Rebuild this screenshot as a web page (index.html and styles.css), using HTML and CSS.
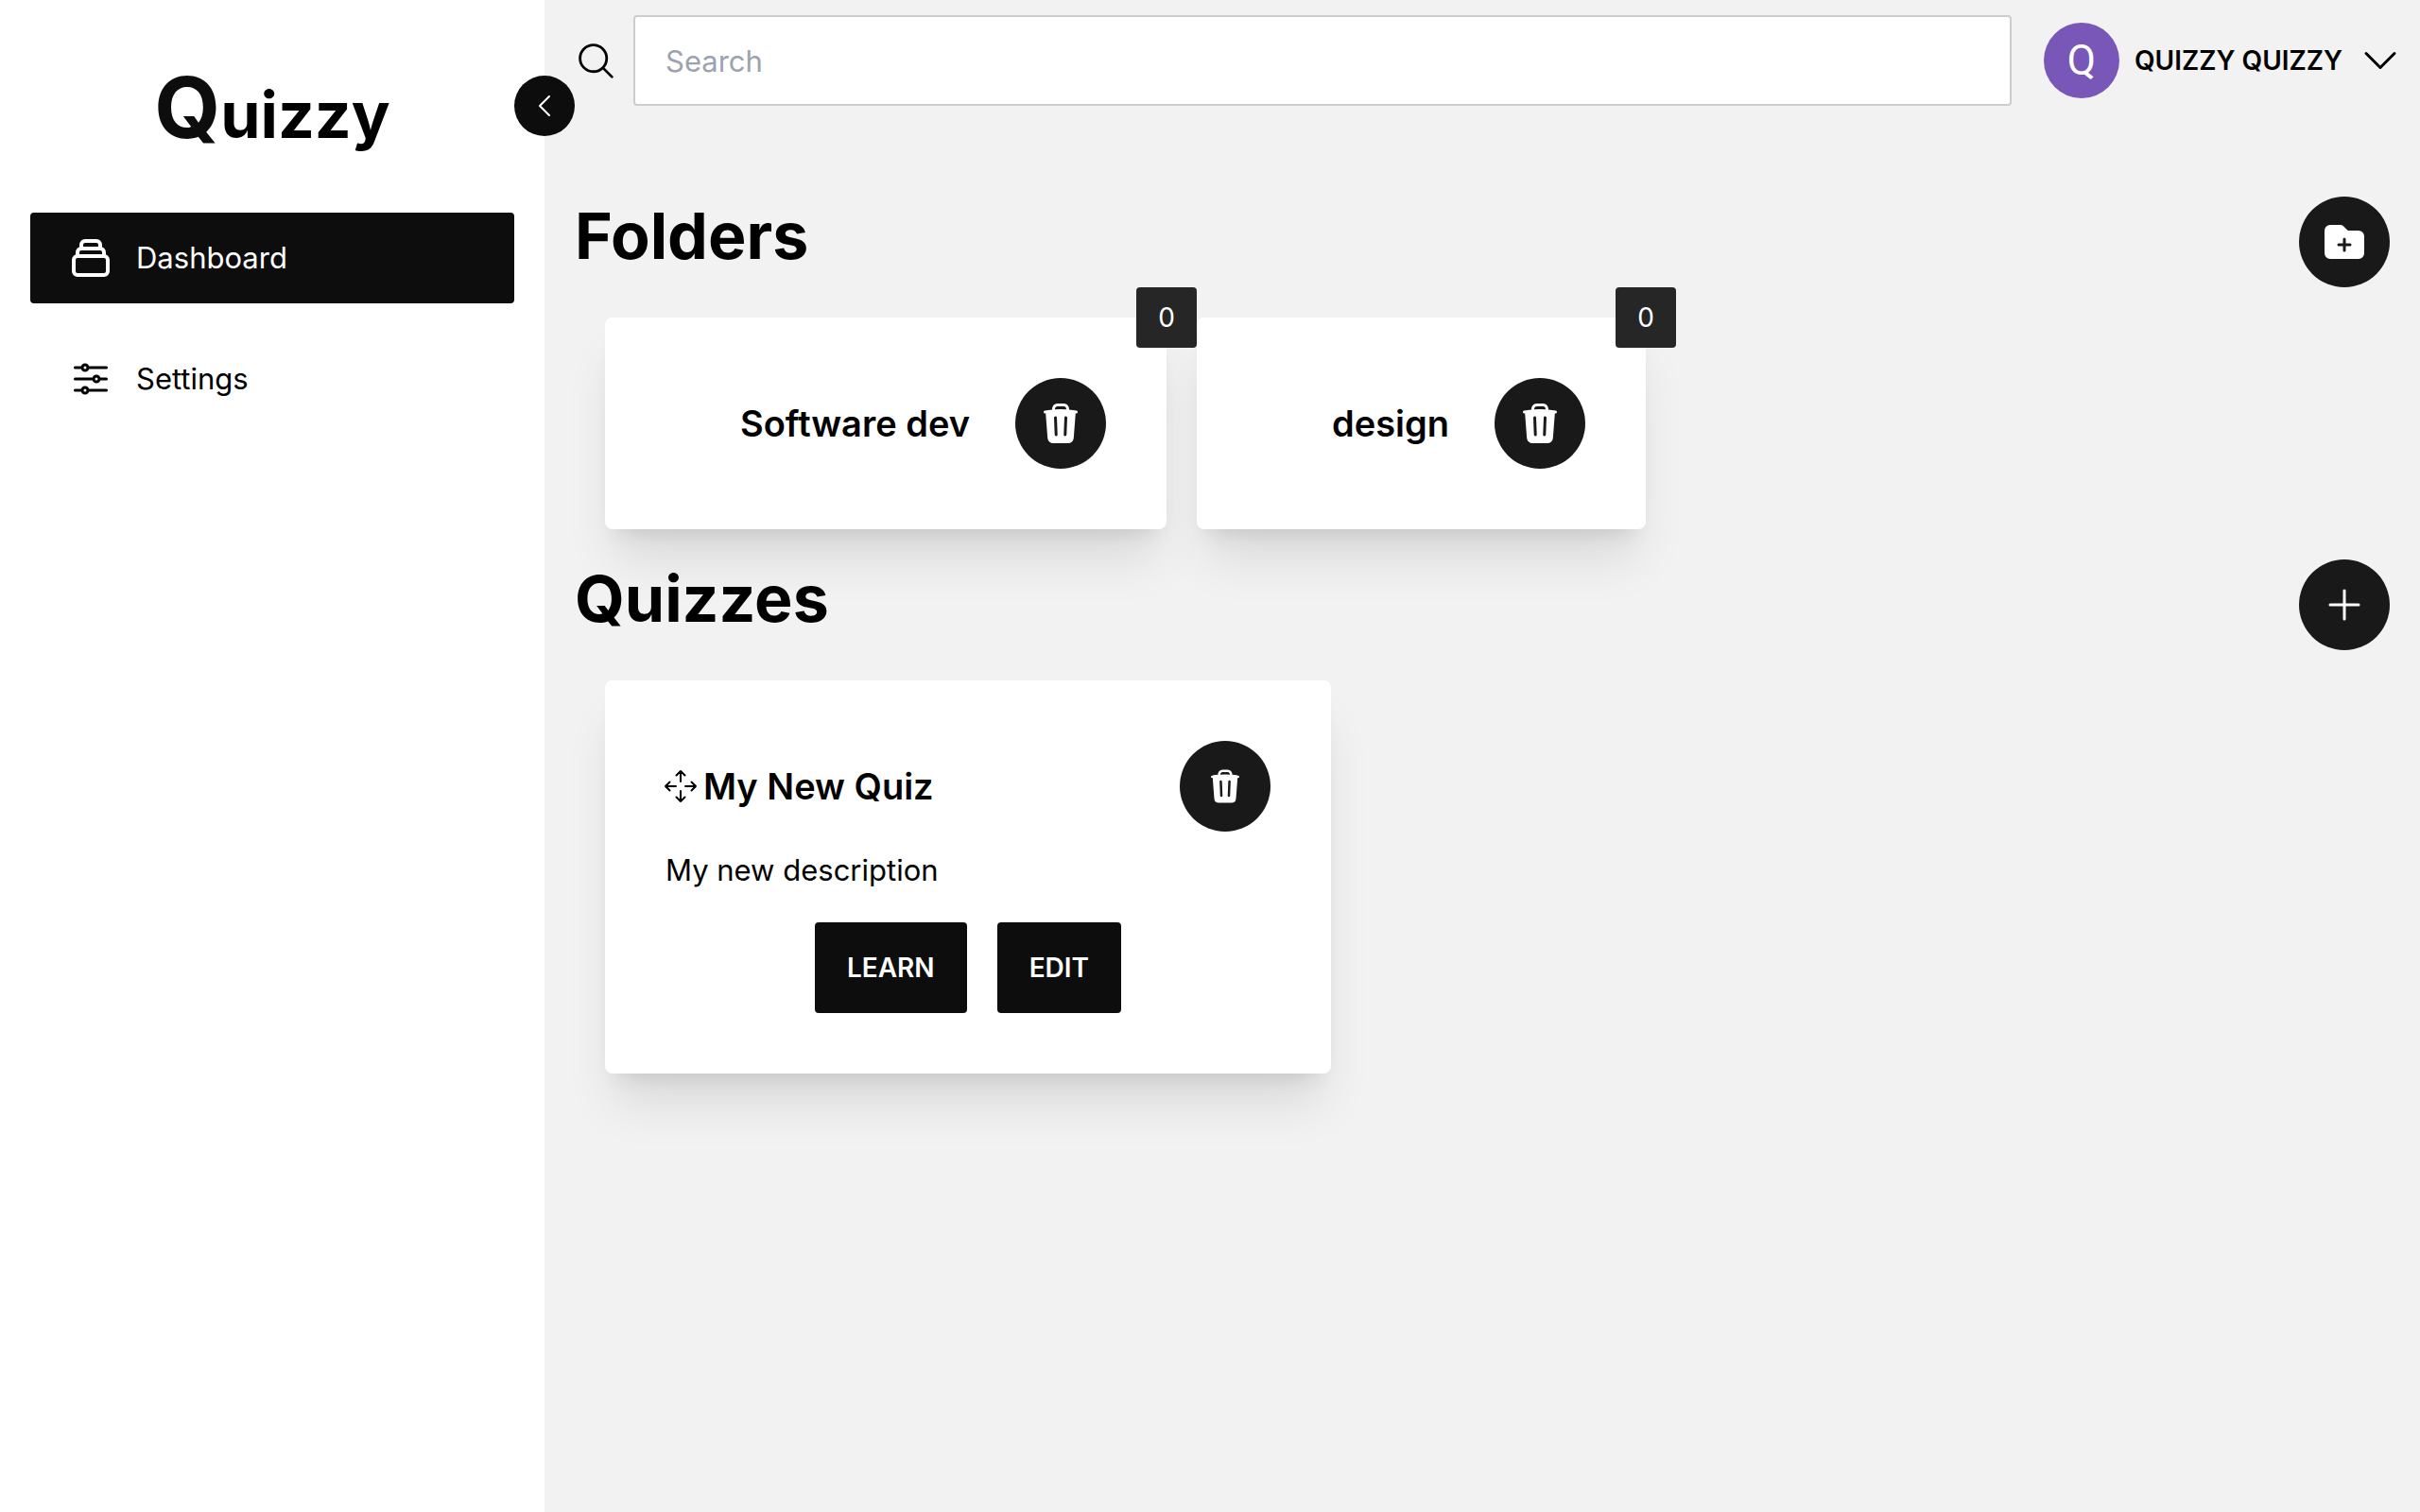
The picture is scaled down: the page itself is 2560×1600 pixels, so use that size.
FILE: index.html
```html
<!DOCTYPE html>
<html lang="en">
<head>
<meta charset="utf-8">
<meta name="viewport" content="width=device-width, initial-scale=1">
<title>Quizzy</title>
<link rel="stylesheet" href="styles.css">
</head>
<body>
<svg class="sprite" aria-hidden="true">
  <symbol id="trash" viewBox="0 0 24 24"><path fill="currentColor" fill-rule="evenodd" clip-rule="evenodd" d="M16.5 4.478v.227a48.816 48.816 0 013.878.512.75.75 0 11-.256 1.478l-.209-.035-1.005 13.07a3 3 0 01-2.991 2.77H8.084a3 3 0 01-2.991-2.77L4.087 6.66l-.209.035a.75.75 0 01-.256-1.478A48.567 48.567 0 017.5 4.705v-.227c0-1.564 1.213-2.9 2.816-2.951a52.662 52.662 0 013.369 0c1.603.051 2.815 1.387 2.815 2.951zm-6.136-1.452a51.196 51.196 0 013.273 0C14.39 3.05 15 3.684 15 4.478v.113a49.488 49.488 0 00-6 0v-.113c0-.794.609-1.428 1.364-1.452zm-.355 5.945a.75.75 0 10-1.5.058l.347 9a.75.75 0 101.499-.058l-.346-9zm5.48.058a.75.75 0 10-1.498-.058l-.347 9a.75.75 0 001.5.058l.345-9z"/></symbol>
</svg>
<div class="app">
  <aside class="sidebar">
    <p class="logo"><span class="logo-initial">Q</span>uizzy</p>
    <nav class="menu">
      <a class="menu-item active" href="#dashboard">
        <svg class="icon thick" viewBox="0 0 24 24"><path d="M19 11H5m14 0a2 2 0 012 2v6a2 2 0 01-2 2H5a2 2 0 01-2-2v-6a2 2 0 012-2m14 0V9a2 2 0 00-2-2M5 11V9a2 2 0 012-2m0 0V5a2 2 0 012-2h6a2 2 0 012 2v2M7 7h10"/></svg>
        Dashboard
      </a>
      <a class="menu-item" href="#settings">
        <svg class="icon" viewBox="0 0 24 24"><path d="M10.5 6h9.75M10.5 6a1.5 1.5 0 11-3 0m3 0a1.5 1.5 0 10-3 0M3.75 6H7.5m3 12h9.75m-9.75 0a1.5 1.5 0 01-3 0m3 0a1.5 1.5 0 00-3 0m-3.75 0H7.5m9-6h3.75m-3.75 0a1.5 1.5 0 01-3 0m3 0a1.5 1.5 0 00-3 0m-9.75 0h9.75"/></svg>
        Settings
      </a>
    </nav>
    <button class="collapse" type="button" aria-label="Collapse sidebar">
      <svg class="icon small" viewBox="0 0 24 24"><path d="M15.75 19.5L8.25 12l7.5-7.5"/></svg>
    </button>
  </aside>
  <div class="content">
    <header class="topbar">
      <label class="search-label" for="search" aria-label="Search">
        <svg class="icon search-icon" viewBox="0 0 24 24"><path d="M21 21l-5.197-5.197m0 0A7.5 7.5 0 105.196 5.196a7.5 7.5 0 0010.607 10.607z"/></svg>
      </label>
      <input class="search" id="search" type="text" placeholder="Search">
      <button class="account" type="button">
        <span class="avatar">Q</span>
        <span class="account-name">QUIZZY QUIZZY</span>
        <svg class="icon" viewBox="0 0 24 24"><path d="M19.5 8.25l-7.5 7.5-7.5-7.5"/></svg>
      </button>
    </header>
    <main class="main">
      <section class="section">
        <div class="section-head">
          <h1 class="title">Folders</h1>
          <button class="round" type="button" aria-label="New folder">
            <svg class="icon" viewBox="0 0 24 24"><path class="solid" fill-rule="evenodd" d="M19.5 21a3 3 0 003-3V9a3 3 0 00-3-3h-5.379a.75.75 0 01-.53-.22L11.47 3.66A2.25 2.25 0 009.879 3H4.5a3 3 0 00-3 3v12a3 3 0 003 3h15zm-6.75-10.5a.75.75 0 00-1.5 0v2.25H9a.75.75 0 000 1.5h2.25v2.25a.75.75 0 001.5 0v-2.25H15a.75.75 0 000-1.5h-2.25V10.5z"/></svg>
          </button>
        </div>
        <div class="cards">
          <article class="card folder">
            <h2 class="card-title">Software dev</h2>
            <button class="round" type="button" aria-label="Delete folder"><svg class="icon"><use href="#trash"/></svg></button>
            <span class="badge">0</span>
          </article>
          <article class="card folder">
            <h2 class="card-title">design</h2>
            <button class="round" type="button" aria-label="Delete folder"><svg class="icon"><use href="#trash"/></svg></button>
            <span class="badge">0</span>
          </article>
        </div>
      </section>
      <section class="section">
        <div class="section-head">
          <h1 class="title">Quizzes</h1>
          <button class="round" type="button" aria-label="New quiz">
            <svg class="icon" viewBox="0 0 24 24"><path d="M12 4.5v15m7.5-7.5h-15"/></svg>
          </button>
        </div>
        <div class="cards">
          <article class="card quiz">
            <div class="quiz-head">
              <svg class="move" viewBox="0 0 32 32"><path d="M16 0v11M11.500 4.500L16 0l4.500 4.500M16 32V21M11.500 27.500L16 32l4.500-4.500M0 16h11M4.500 11.500L0 16l4.500 4.500M32 16H21M27.500 11.500L32 16l-4.500 4.500"/></svg>
              <h2 class="card-title">My New Quiz</h2>
              <button class="round" type="button" aria-label="Delete quiz"><svg class="icon medium"><use href="#trash"/></svg></button>
            </div>
            <p class="description">My new description</p>
            <div class="actions">
              <button class="action" type="button">LEARN</button>
              <button class="action" type="button">EDIT</button>
            </div>
          </article>
        </div>
      </section>
    </main>
  </div>
</div>
</body>
</html>
```
FILE: styles.css
```css
*, *::before, *::after { box-sizing: border-box; }

body {
  margin: 0;
  background: #f2f2f2;
  color: #000;
  font-family: Inter, "Liberation Sans", sans-serif;
  font-size: 31px;
  line-height: 50px;
}

h1, h2, p { margin: 0; }

button {
  border: 0;
  padding: 0;
  font: inherit;
  color: inherit;
  cursor: pointer;
}

.sprite { position: absolute; width: 0; height: 0; }

.icon {
  flex: none;
  display: block;
  width: 48px;
  height: 48px;
  fill: none;
  stroke: currentColor;
  stroke-width: 1.5;
  stroke-linecap: round;
  stroke-linejoin: round;
}
.icon.thick { stroke-width: 2; }
.icon.small { width: 32px; height: 32px; }
.icon.medium { width: 40px; height: 40px; }
.icon.search-icon { width: 45px; height: 45px; }
.icon .solid { fill: currentColor; stroke: none; }
.icon use { stroke: none; }

.app { display: flex; min-height: 100vh; }

.sidebar {
  position: relative;
  flex: none;
  width: 576px;
  padding: 64px 32px;
  background: #fff;
}

.logo {
  height: 97px;
  margin-bottom: 64px;
  font-size: 68px;
  font-weight: 700;
  line-height: 99px;
  text-align: center;
}
.logo-initial { font-size: 90px; color: #0d0d0d; }

.menu { display: flex; flex-direction: column; gap: 32px; }

.menu-item {
  display: flex;
  align-items: center;
  gap: 24px;
  height: 96px;
  padding: 0 40px;
  border-radius: 4px;
  color: #000;
  text-decoration: none;
}
.menu-item.active { background: #0d0d0d; color: #fff; }

.collapse {
  position: absolute;
  top: 80px;
  right: -32px;
  display: grid;
  place-items: center;
  width: 64px;
  height: 64px;
  border-radius: 50%;
  background: #0d0d0d;
  color: #fff;
}

.content { flex: 1; min-width: 0; }

.topbar {
  display: flex;
  align-items: center;
  padding: 16px 18px 16px 32px;
}

.search-label { margin-right: 17px; }

.search {
  flex: 1;
  min-width: 0;
  height: 96px;
  padding: 0 32px;
  border: 2px solid #cdcdcd;
  border-radius: 4px;
  background: #fff;
  font: inherit;
}
.search::placeholder { color: #9ca3af; opacity: 1; }

.account {
  display: flex;
  align-items: center;
  gap: 16px;
  margin-left: 34px;
  background: none;
  font-size: 28px;
  font-weight: 600;
}

.avatar {
  display: grid;
  place-items: center;
  width: 80px;
  height: 80px;
  border-radius: 50%;
  background: #7857b9;
  color: #fff;
  font-family: Roboto, sans-serif;
  font-size: 44px;
  font-weight: 400;
}

.main { padding: 80px 32px 32px; }

.section { margin-bottom: 32px; }

.section-head {
  display: flex;
  justify-content: space-between;
  align-items: flex-start;
  margin-bottom: 32px;
}

.title { font-size: 68px; font-weight: 700; line-height: 83px; }

.round {
  flex: none;
  display: grid;
  place-items: center;
  width: 96px;
  height: 96px;
  border-radius: 50%;
  background: #191919;
  color: #fff;
}

.cards { display: flex; flex-wrap: wrap; gap: 32px; padding: 0 32px; }

.card {
  padding: 64px;
  border-radius: 8px;
  background: #fff;
  box-shadow: 0 40px 50px -10px rgba(0, 0, 0, .1), 0 16px 20px -12px rgba(0, 0, 0, .1);
}

.card-title { font-size: 38px; font-weight: 600; line-height: 56px; }

.folder {
  position: relative;
  display: flex;
  align-items: center;
  gap: 48px;
  padding-left: 143px;
}

.badge {
  position: absolute;
  top: -32px;
  right: -32px;
  display: grid;
  place-items: center;
  width: 64px;
  height: 64px;
  border-radius: 4px;
  background: #262626;
  color: #fff;
  font-size: 28px;
}

.quiz { width: 768px; }

.quiz-head { display: flex; align-items: center; gap: 8px; }
.quiz-head .round { margin-left: auto; }

.move {
  width: 32px;
  height: 32px;
  overflow: visible;
  fill: none;
  stroke: #000;
  stroke-width: 2;
  stroke-linecap: round;
  stroke-linejoin: round;
}

.description { margin-top: 16px; }

.actions { display: flex; justify-content: center; gap: 32px; margin-top: 30px; }

.action {
  height: 96px;
  padding: 0 34px;
  border-radius: 4px;
  background: #0d0d0d;
  color: #fff;
  font-size: 28px;
  font-weight: 600;
}
```
